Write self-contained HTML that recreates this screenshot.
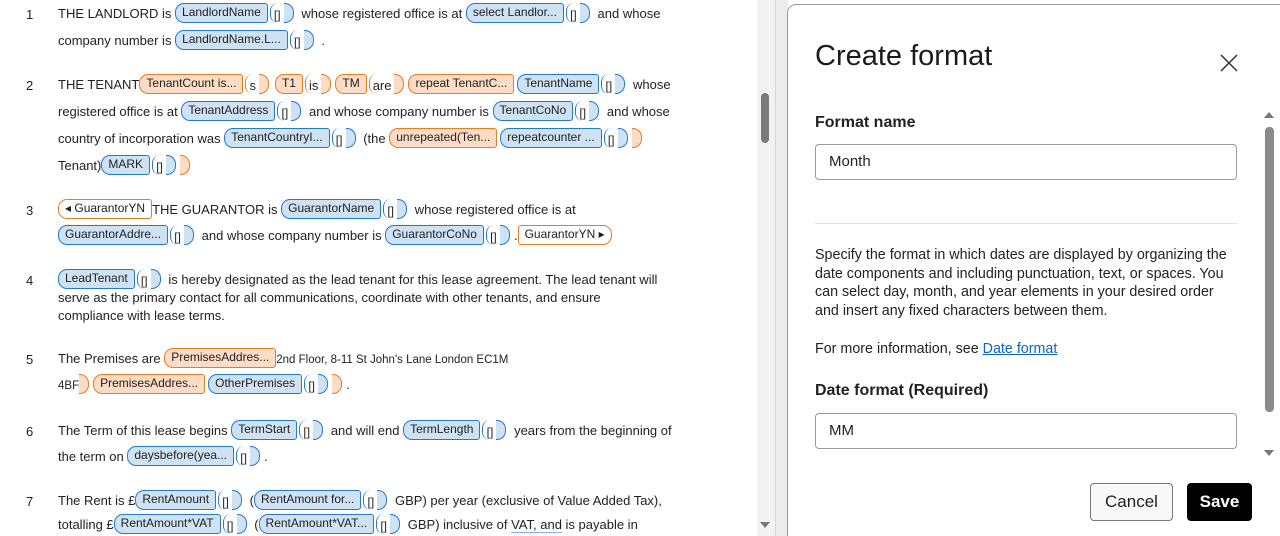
<!DOCTYPE html>
<html style="overflow:hidden;width:1280px;height:536px"><head><meta charset="utf-8"><style>
*{box-sizing:border-box;margin:0;padding:0}
body{width:1280px;height:536px;overflow:hidden;background:#fff;position:relative;font-family:"Liberation Sans",sans-serif;color:#222}
.doc{position:absolute;left:0;top:0;width:757px;height:536px;background:#fff;font-size:13px}
.n{position:absolute;left:26px;font-size:13px}
.l{position:absolute;left:58px;white-space:nowrap;height:22px;line-height:22px}
.c,.o{display:inline-block;height:20px;line-height:17px;padding:0 6px;font-family:"Liberation Sans Narrow","Liberation Sans",sans-serif;font-size:12px;vertical-align:top;margin-top:0;color:#222}
.c{border:1.6px solid #1f7ad6;background:#cfe2f4;border-radius:9px 3px 3px 9px}
.o{border:1.6px solid #f07a1e;background:#fcdcc5;border-radius:9px 3px 3px 9px}
.k{display:inline-block;height:20px;width:14px;border-left:1.6px solid #1f7ad6;border-radius:8px 0 0 8px;font-size:12px;line-height:24px;text-align:center;vertical-align:top;margin:0 0 0 2px}
.z{display:inline-block;width:10px;height:20px;border:1.6px solid #1f7ad6;border-left:none;background:#cfe2f4;border-radius:0 9px 9px 0;vertical-align:top;margin:0 4px 0 0}
.zo{display:inline-block;width:10px;height:20px;border:1.6px solid #f07a1e;border-left:none;background:#fcdcc5;border-radius:0 9px 9px 0;vertical-align:top;margin:0 4px 0 0}
.ko{display:inline-block;height:20px;padding:0 3px;border-left:1.6px solid #f07a1e;border-radius:8px 0 0 8px;vertical-align:top;margin:0 0 0 2px;line-height:24px}
.vs{position:absolute;left:757px;top:0;width:18px;height:536px;background:#f2f2f2}
.thumb{position:absolute;left:761px;top:93px;width:8px;height:50px;background:#7a7a7a;border-radius:4px}
.gap{position:absolute;left:775px;top:0;width:13px;height:536px;background:#ececec;border-left:1px solid #d6d6d6}
.panel{position:absolute;left:787px;top:4px;width:493px;height:532px;background:#fff;border:1px solid #9a9a9a;border-right:none;border-bottom:none;border-radius:9px 0 0 0;font-family:"Liberation Sans",sans-serif;color:#1b1b1b}
.ps{position:absolute;left:815px}
.inp{position:absolute;left:815px;width:422px;height:36px;border:1px solid #9a9a9a;border-radius:4px;font-size:15px;line-height:34px;padding-left:13px}
</style></head><body>
<div class="doc">
<div class="n" style="top:7px">1</div>
<div class="l" style="top:3px">THE LANDLORD is <span class="c">LandlordName</span><span class="k">[]</span><span class="z"></span> whose registered office is at <span class="c">select Landlor...</span><span class="k">[]</span><span class="z"></span> and whose</div>
<div class="l" style="top:30px">company number is <span class="c">LandlordName.L...</span><span class="k">[]</span><span class="z"></span> .</div>

<div class="n" style="top:78px">2</div>
<div class="l" style="top:74px">THE TENANT<span class="o">TenantCount is...</span><span class="ko">s</span><span class="zo"></span><span class="o" style="margin-left:2px">T1</span><span class="ko">is</span><span class="zo"></span><span class="o">TM</span><span class="ko">are</span><span class="zo"></span><span class="o">repeat TenantC...</span><span class="c" style="margin-left:3px">TenantName</span><span class="k">[]</span><span class="z"></span> whose</div>
<div class="l" style="top:101px">registered office is at <span class="c">TenantAddress</span><span class="k">[]</span><span class="z"></span> and whose company number is <span class="c">TenantCoNo</span><span class="k">[]</span><span class="z"></span> and whose</div>
<div class="l" style="top:128px">country of incorporation was <span class="c">TenantCountryI...</span><span class="k">[]</span><span class="z"></span> (the <span class="o">unrepeated(Ten...</span><span class="c" style="margin-left:3px">repeatcounter ...</span><span class="k">[]</span><span class="z"></span><span class="zo"></span></div>
<div class="l" style="top:155px">Tenant)<span class="c">MARK</span><span class="k">[]</span><span class="z"></span><span class="zo"></span></div>

<div class="n" style="top:203px">3</div>
<div class="l" style="top:199px"><span class="o" style="background:#fff">◂ GuarantorYN</span>THE GUARANTOR is <span class="c">GuarantorName</span><span class="k">[]</span><span class="z"></span> whose registered office is at</div>
<div class="l" style="top:225px"><span class="c">GuarantorAddre...</span><span class="k">[]</span><span class="z"></span> and whose company number is <span class="c">GuarantorCoNo</span><span class="k">[]</span><span class="z"></span>.<span class="o" style="background:#fff;border-radius:3px 9px 9px 3px">GuarantorYN ▸</span></div>

<div class="n" style="top:273px">4</div>
<div class="l" style="top:269px"><span class="c">LeadTenant</span><span class="k">[]</span><span class="z"></span> is hereby designated as the lead tenant for this lease agreement. The lead tenant will</div>
<div class="l" style="top:287px">serve as the primary contact for all communications, coordinate with other tenants, and ensure</div>
<div class="l" style="top:305px">compliance with lease terms.</div>

<div class="n" style="top:352px">5</div>
<div class="l" style="top:348px">The Premises are <span class="o">PremisesAddres...</span><span style="font-size:11.5px">2nd Floor, 8-11 St John's Lane London EC1M</span></div>
<div class="l" style="top:374px"><span style="font-size:11.5px">4BF</span><span class="zo"></span><span class="o">PremisesAddres...</span><span class="c" style="margin-left:3px">OtherPremises</span><span class="k">[]</span><span class="z"></span><span class="zo"></span>.</div>

<div class="n" style="top:424px">6</div>
<div class="l" style="top:420px">The Term of this lease begins <span class="c">TermStart</span><span class="k">[]</span><span class="z"></span> and will end <span class="c">TermLength</span><span class="k">[]</span><span class="z"></span> years from the beginning of</div>
<div class="l" style="top:446px">the term on <span class="c">daysbefore(yea...</span><span class="k">[]</span><span class="z"></span>.</div>

<div class="n" style="top:494px">7</div>
<div class="l" style="top:490px">The Rent is £<span class="c">RentAmount</span><span class="k">[]</span><span class="z"></span> (<span class="c">RentAmount for...</span><span class="k">[]</span><span class="z"></span> GBP) per year (exclusive of Value Added Tax),</div>
<div class="l" style="top:514px">totalling £<span class="c">RentAmount*VAT</span><span class="k">[]</span><span class="z"></span> (<span class="c">RentAmount*VAT...</span><span class="k">[]</span><span class="z"></span> GBP) inclusive of <span style="border-bottom:1.5px solid #8ab0e6">VAT, and</span> is payable in</div>
</div>
<div class="vs"></div><div class="thumb"></div>
<div style="position:absolute;left:760px;top:522px;width:0;height:0;border-left:5px solid transparent;border-right:5px solid transparent;border-top:6px solid #777"></div>
<div class="gap"></div>
<div class="panel"></div>
<div class="ps" style="top:40px;font-size:29px;color:#1b1b1b">Create format</div>
<svg style="position:absolute;left:1220px;top:54px" width="18" height="18" viewBox="0 0 18 18"><path d="M1 1L17 17M17 1L1 17" stroke="#333" stroke-width="1.5"/></svg>
<div class="ps" style="top:114px;font-size:16px;font-weight:bold">Format name</div>
<div class="inp" style="top:144px">Month</div>
<div style="position:absolute;left:815px;top:223px;width:422px;height:1px;background:#e2e2e2"></div>
<div class="ps" style="top:246px;width:420px;font-size:14.3px;line-height:18.7px">Specify the format in which dates are displayed by organizing the date components and including punctuation, text, or spaces. You can select day, month, and year elements in your desired order and insert any fixed characters between them.</div>
<div class="ps" style="top:341px;font-size:14.3px">For more information, see <span style="color:#0b63ce;text-decoration:underline">Date format</span></div>
<div class="ps" style="top:382px;font-size:16px;font-weight:bold">Date format (Required)</div>
<div class="inp" style="top:413px">MM</div>
<div style="position:absolute;left:1090px;top:483px;width:83px;height:38px;border:1px solid #777;border-radius:4px;background:#f8f8f8;font-size:17px;line-height:36px;text-align:center">Cancel</div>
<div style="position:absolute;left:1187px;top:483px;width:65px;height:38px;border-radius:4px;background:#000;color:#fff;font-size:17px;font-weight:bold;line-height:38px;text-align:center">Save</div>
<div style="position:absolute;left:1264px;top:112px;width:0;height:0;border-left:5px solid transparent;border-right:5px solid transparent;border-bottom:6px solid #777"></div>
<div style="position:absolute;left:1265px;top:127px;width:9px;height:285px;background:#8a8a8a;border-radius:4px"></div>
<div style="position:absolute;left:1264px;top:450px;width:0;height:0;border-left:5px solid transparent;border-right:5px solid transparent;border-top:6px solid #777"></div>
</body></html>
